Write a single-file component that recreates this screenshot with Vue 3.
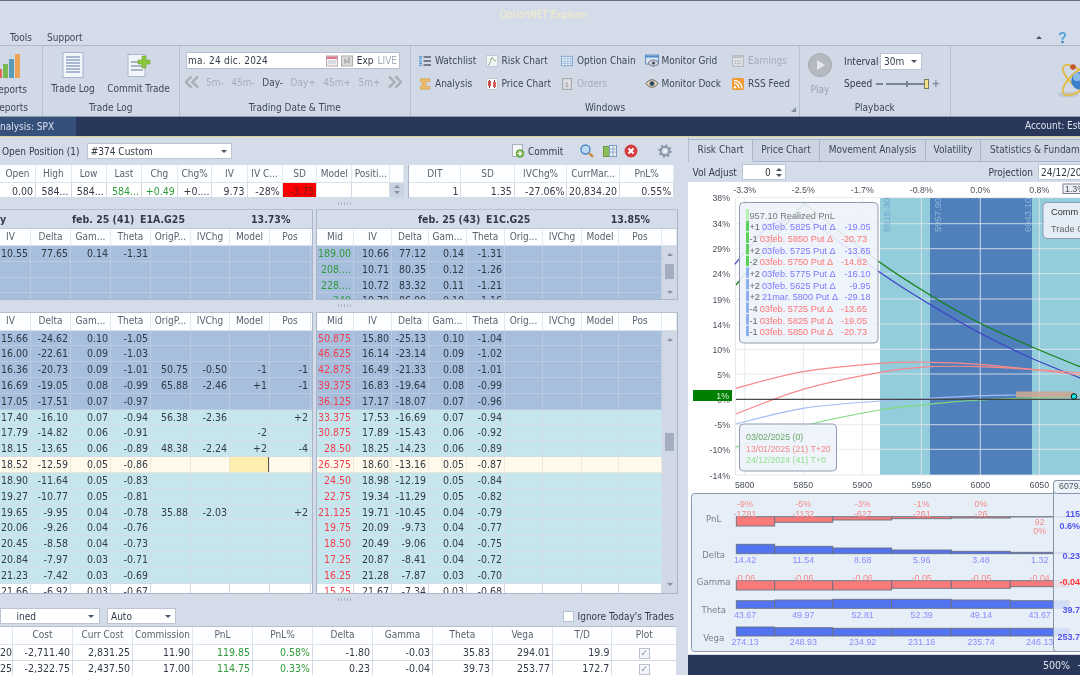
<template>
  <div class="app">
    <!-- title + menu -->
    <header class="titlebar">OptionNET Explorer</header>
    <nav class="menubar">
      <span>Tools</span>
      <span>Support</span>
      <i class="menu-gap" />
      <b class="caret-up" />
      <svg class="help" viewBox="0 0 12 14"><path d="M2 4.500C2 2 4 1 6 1s4 1.200 4 3.400c0 2.600-3 2.600-3 5H5c0-3 3-3.200 3-5 0-1-.8-1.500-2-1.500S4 3.500 4 4.500z" fill="#4f9fd8"/><circle cx="6" cy="12" r="1.500" fill="#3d86c4"/></svg>
    </nav>

    <!-- ribbon -->
    <section class="ribbon">
      <div class="rgroup g-reports">
        <div class="rbody">
          <svg class="ic-big" viewBox="0 0 24 26">
            <rect x="-2" y="16" width="6" height="9" fill="#e2665a"/>
            <rect x="5" y="11" width="5" height="14" fill="#79b94f"/>
            <rect x="11" y="6" width="5" height="19" fill="#5a9bb8"/>
            <rect x="17" y="1" width="5" height="24" fill="#eda257"/>
          </svg>
          <span class="big-label">Reports</span>
        </div>
        <div class="rlabel">Reports</div>
      </div>

      <div class="rgroup g-log">
        <div class="rbody big-row">
          <div class="big-btn btn-log">
            <svg class="ic-big" viewBox="0 0 24 26">
              <rect x="2" y="0.500" width="20" height="25" fill="#f2f5fa" stroke="#a4b4cf"/>
              <path d="M5 5h14M5 8h14M5 11h14M5 14h14M5 17h14M5 20h14" stroke="#8fa2c4" stroke-width="1.400"/>
            </svg>
            <span class="big-label">Trade Log</span>
          </div>
          <div class="big-btn btn-commit">
            <svg class="ic-big" viewBox="0 0 24 26">
              <rect x="1" y="2.500" width="17" height="22" fill="#f2f5fa" stroke="#a9b6cb"/>
              <path d="M4 10h12M4 14h11M4 18h12" stroke="#8fa2b4" stroke-width="1.400"/>
              <path d="M15 4h4v4h4v4h-4v4h-4v-4h-4V8h4z" fill="#8cc63f" stroke="#6ca32a" stroke-width=".6"/>
            </svg>
            <span class="big-label">Commit Trade</span>
          </div>
        </div>
        <div class="rlabel">Trade Log</div>
      </div>

      <div class="rgroup g-date">
        <div class="rbody date-body">
          <div class="date-input">
            <span class="date-val">ma. 24 dic. 2024</span>
            <svg class="ic" viewBox="0 0 12 11"><rect x=".5" y=".5" width="11" height="10" fill="#f6f0f0" stroke="#b9a6ae"/><rect x="1" y="1" width="10" height="2.500" fill="#d8798a"/><path d="M2 5.500h8M2 7.500h8" stroke="#b8c4da"/></svg>
            <svg class="ic" viewBox="0 0 12 11"><rect x=".5" y=".5" width="11" height="10" fill="#dcdcdc" stroke="#aaa"/><path d="M4 3v5M8 2v6M6 5v2" stroke="#888"/></svg>
            <span class="exp">Exp</span>
            <span class="live">LIVE</span>
          </div>
          <div class="step-row">
            <svg class="chev" viewBox="0 0 15 14"><path d="M7 1L1 7l6 6M14 1L8 7l6 6" fill="none" stroke="#a9adb4" stroke-width="2.600"/></svg>
            <span class="step">5m-</span>
            <span class="step">45m-</span>
            <span class="step on">Day-</span>
            <span class="step">Day+</span>
            <span class="step">45m+</span>
            <span class="step">5m+</span>
            <svg class="chev" viewBox="0 0 15 14"><path d="M1 1l6 6-6 6M8 1l6 6-6 6" fill="none" stroke="#a9adb4" stroke-width="2.600"/></svg>
          </div>
        </div>
        <div class="rlabel">Trading Date &amp; Time</div>
      </div>

      <div class="rgroup g-win">
        <div class="rbody win-grid">
          <div class="wbtn">
            <svg class="ic" viewBox="0 0 12 12"><path d="M1.500 1v10" stroke="#4c93cf" stroke-width="2.400" stroke-dasharray="1.400 .8"/><path d="M4.500 2H12M4.500 6H12M4.500 10H12" stroke="#555e6c" stroke-width="1.300"/></svg>
            Watchlist
          </div>
          <div class="wbtn">
            <svg class="ic" viewBox="0 0 12 12"><rect x=".5" y=".5" width="11" height="11" fill="#f3f5f8" stroke="#c2c8d2"/><path d="M2 10c3 0 2-7 4-7s1 3 4 3" fill="none" stroke="#78ab62"/></svg>
            Risk Chart
          </div>
          <div class="wbtn">
            <svg class="ic" viewBox="0 0 14 12"><rect x=".5" y=".5" width="13" height="11" fill="#eef4fb" stroke="#6f9ccc"/><path d="M1 3.500h12M1 6.500h12M1 9h12M4.500 1v10M8 1v10M11 1v10" stroke="#8bb1d8" stroke-width=".8"/></svg>
            Option Chain
          </div>
          <div class="wbtn w-mon">
            <svg class="ic-mon" viewBox="0 0 14 12"><rect x=".5" y=".5" width="13" height="9" fill="#d7e5f4" stroke="#5f8fbf"/><rect x="1" y="1" width="12" height="2" fill="#4f8bc6"/><ellipse cx="8.500" cy="8.500" rx="5" ry="3" fill="#cfd4dc" stroke="#59606e" stroke-width=".8"/><circle cx="8.500" cy="8.500" r="1.500" fill="#3f4855"/></svg>
            Monitor Grid
          </div>
          <div class="wbtn off">
            <svg class="ic" viewBox="0 0 12 12"><rect x=".5" y=".5" width="11" height="11" fill="#dddfe3" stroke="#b6b9bf"/><rect x=".5" y=".5" width="11" height="2.500" fill="#bfc2c8"/><path d="M3 6h6M3 8.500h6" stroke="#a5a8ae" stroke-dasharray="1.200 1"/></svg>
            Earnings
          </div>
          <div class="wbtn">
            <svg class="ic" viewBox="0 0 12 13"><path d="M.8 .8h10.400v3.200H5.600L8 6.500 5.600 9h5.600v3.200H.8V9.700L3.800 6.500.8 3.300z" fill="#eebb6a" stroke="#d49a3a" stroke-width=".6"/></svg>
            Analysis
          </div>
          <div class="wbtn">
            <svg class="ic" viewBox="0 0 12 12"><rect x=".5" y=".5" width="11" height="11" fill="#f3f5f8" stroke="#c2c8d2"/><path d="M3.500 2v8M8.500 2v8" stroke="#7c3030"/><rect x="2" y="3" width="3" height="5" fill="#c84f4f"/><rect x="7" y="4" width="3" height="5" fill="#d65d5d"/></svg>
            Price Chart
          </div>
          <div class="wbtn off">
            <svg class="ic" viewBox="0 0 12 12"><rect x="1.500" y=".5" width="9" height="11" fill="#d0d2d6" stroke="#a8abb1"/><rect x="3" y="2" width="6" height="8" fill="#e1e2e5"/><text x="6" y="8.800" class="ic-dollar">$</text></svg>
            Orders
          </div>
          <div class="wbtn w-mon">
            <svg class="ic-mon" viewBox="0 0 14 12"><path d="M1 6c3-5 9-5 12 0-3 5-9 5-12 0z" fill="#e7d7b6" stroke="#6f6658"/><circle cx="7" cy="6" r="2.600" fill="#4e6f8e"/><circle cx="7" cy="6" r="1.200" fill="#222c36"/></svg>
            Monitor Dock
          </div>
          <div class="wbtn">
            <svg class="ic" viewBox="0 0 12 12"><rect width="12" height="12" rx="1.500" fill="#ef9a2f"/><circle cx="3" cy="9.200" r="1.300" fill="#fff"/><path d="M2 5.200a5 5 0 0 1 5 5M2 2.400a8 8 0 0 1 8 8" fill="none" stroke="#fff" stroke-width="1.500"/></svg>
            RSS Feed
          </div>
        </div>
        <div class="rlabel">Windows</div>
        <b class="launcher" />
      </div>

      <div class="rgroup g-play">
        <div class="rbody play-body">
          <div class="play-btn">
            <span class="play-disc"><b class="play-tri" /></span>
            <span class="big-label muted">Play</span>
          </div>
          <div class="play-side">
            <div class="play-line">
              <span class="play-name">Interval</span>
              <span class="combo combo-int">30m<b class="caret" /></span>
            </div>
            <div class="play-line">
              <span class="play-name name-speed">Speed</span>
              <span class="slider">
                <b class="sl-minus" />
                <span class="sl-track"><b class="sl-tick" /><b class="sl-thumb" /></span>
                <b class="sl-plus">+</b>
              </span>
            </div>
          </div>
        </div>
        <div class="rlabel">Playback</div>
      </div>

      <div class="rgroup g-logo">
        <svg class="atom" viewBox="0 0 60 60">
          <ellipse cx="14" cy="50" rx="14" ry="3.500" fill="#b7bdc8" opacity=".7"/>
          <g fill="none" stroke="#e2bb42" stroke-width="2.400">
            <ellipse cx="30" cy="30" rx="29" ry="12" transform="rotate(-40 30 30)"/>
            <ellipse cx="30" cy="30" rx="29" ry="11" transform="rotate(40 30 30)"/>
          </g>
          <circle cx="30" cy="31" r="12" fill="#3d7fcb"/>
          <circle cx="26" cy="26" r="5.500" fill="#9fcaf2" opacity=".8"/>
          <circle cx="20.500" cy="12.300" r="3.800" fill="#c4552f"/>
        </svg>
      </div>
    </section>

    <!-- navy strip -->
    <div class="navstrip">
      <span class="navtab">nalysis: SPX</span>
      <span class="account">Account: Est</span>
    </div>

    <main class="work">
      <section class="left">
        <div class="pos-bar">
          <span class="pos-name">Open Position (1)</span>
          <span class="combo combo-pos">#374 Custom<b class="caret" /></span>
          <span class="pos-commit">
            <svg class="ic-tool" viewBox="0 0 14 14"><rect x="1.500" y=".5" width="10" height="12" fill="#f5f6f8" stroke="#a8b0bc"/><circle cx="9" cy="9.500" r="4.300" fill="#69a93d"/><path d="M9 7v5M6.500 9.500h5" stroke="#fff" stroke-width="1.500"/></svg>
            Commit
          </span>
          <svg class="ic-tool t-search" viewBox="0 0 14 14"><circle cx="5.500" cy="5.500" r="4.500" fill="#bcd9f2" stroke="#4f86c6" stroke-width="1.400"/><path d="M9 9l4 4" stroke="#c9893c" stroke-width="2.400"/></svg>
          <svg class="ic-tool t-col" viewBox="0 0 14 14"><rect x=".5" y="2.500" width="6" height="10" fill="#8bbd5a" stroke="#6d9a42"/><rect x="6.500" y="1.500" width="7" height="11" fill="#edf2f8" stroke="#7c9cbf"/><path d="M7 5h6M7 8h6M10 2v10" stroke="#7c9cbf" stroke-width=".8"/></svg>
          <svg class="ic-tool t-x" viewBox="0 0 14 14"><circle cx="7" cy="7" r="6.500" fill="#d33f3f"/><path d="M4.500 4.500l5 5M9.500 4.500l-5 5" stroke="#fff" stroke-width="2"/></svg>
          <svg class="ic-tool t-gear" viewBox="0 0 14 14"><circle cx="7" cy="7" r="4.300" fill="none" stroke="#8592a4" stroke-width="2"/><circle cx="7" cy="7" r="6" fill="none" stroke="#8592a4" stroke-width="1.600" stroke-dasharray="1.800 2.900"/><circle cx="7" cy="7" r="1.700" fill="#eef1f5"/></svg>
        </div>

        <div class="pos-tables">
          <div class="grid pos-a">
            <div class="ghead">
              <span v-for="h in posHeadA" :key="h">{{ h }}</span>
              <span class="sb-cell" />
            </div>
            <div class="grow">
              <span v-for="(c, i) in posRowA" :key="i" class="cell" :class="c.cls">{{ c.t }}</span>
              <span class="sb-cell spin"><b class="caret-up soft" /><b class="caret soft" /></span>
            </div>
          </div>
          <div class="grid pos-b">
            <div class="ghead">
              <span v-for="h in posHeadB" :key="h">{{ h }}</span>
            </div>
            <div class="grow">
              <span v-for="(c, i) in posRowB" :key="i" class="cell">{{ c }}</span>
            </div>
          </div>
        </div>

        <div class="splitter"><i /></div>

        <div class="chains chain-top">
          <div class="grid chain cl">
            <div class="exp-head eh-l"><span>y</span><span>feb. 25 (41)</span><span>E1A.G25</span><span class="ivr">13.73%</span></div>
            <div class="ghead"><span v-for="h in headL" :key="h">{{ h }}</span></div>
            <div v-for="(r, i) in callsL" :key="i" class="grow blue">
              <span v-for="(c, j) in r" :key="j" class="cell">{{ c }}</span>
            </div>
          </div>
          <div class="grid chain cr">
            <div class="exp-head eh-r"><span>feb. 25 (43)</span><span>E1C.G25</span><span class="ivr">13.85%</span></div>
            <div class="ghead"><span v-for="h in headR" :key="h">{{ h }}</span><span class="sb-cell" /></div>
            <div v-for="(r, i) in callsR" :key="i" class="grow blue">
              <span v-for="(c, j) in r" :key="j" class="cell" :class="{ up: j === 0 }">{{ c }}</span>
              <span class="sb-cell sb-blank" />
            </div>
            <div class="sbar sbar-top"><b class="caret-up soft" /><i class="thumb thumb-top" /><b class="caret soft" /></div>
          </div>
        </div>

        <div class="splitter split-2"><i /></div>

        <div class="chains chain-low">
          <div class="grid chain cl">
            <div class="ghead"><span v-for="h in headL" :key="h">{{ h }}</span></div>
            <div v-for="(r, i) in putsL" :key="i" class="grow" :class="tone(i)">
              <span v-for="(c, j) in r" :key="j" class="cell" :class="{ pick: i === 8 && j === 6 }">{{ c }}</span>
            </div>
          </div>
          <div class="grid chain cr">
            <div class="ghead"><span v-for="h in headR" :key="h">{{ h }}</span><span class="sb-cell" /></div>
            <div v-for="(r, i) in putsR" :key="i" class="grow" :class="tone(i)">
              <span v-for="(c, j) in r" :key="j" class="cell" :class="{ down: j === 0 }">{{ c }}</span>
              <span class="sb-cell sb-blank" />
            </div>
            <div class="sbar sbar-low"><b class="caret-up soft" /><i class="thumb thumb-low" /><b class="caret soft" /></div>
          </div>
        </div>

        <div class="splitter split-3"><i /></div>

        <div class="sum-bar">
          <span class="combo combo-mode">ined<b class="caret" /></span>
          <span class="combo combo-auto">Auto<b class="caret" /></span>
          <label class="ignore"><i class="check" />Ignore Today's Trades</label>
        </div>

        <div class="grid sum">
          <div class="ghead"><span v-for="h in sumHead" :key="h">{{ h }}</span></div>
          <div v-for="(r, i) in sumRows" :key="i" class="grow">
            <span v-for="(c, j) in r" :key="j" class="cell" :class="{ up: j === 4 || j === 5 }">{{ c }}</span>
            <span class="cell plot"><i class="check checked">✓</i></span>
          </div>
        </div>
      </section>

      <section class="right">
        <div class="tabs">
          <span v-for="(t, i) in tabs" :key="t" class="tab" :class="{ active: i === 0 }">{{ t }}</span>
        </div>
        <div class="vol-bar">
          <span>Vol Adjust</span>
          <span class="spinbox">0<span class="spin"><b class="caret-up" /><b class="caret" /></span></span>
          <span class="proj">Projection</span>
          <span class="proj-input">24/12/2024</span>
        </div>

        <svg class="chart" viewBox="688 182 392 472">
          <rect x="688" y="182" width="392" height="472" fill="#fff"/>
          <!-- expected move bands -->
          <rect x="880" y="198" width="200" height="277" fill="#93ccdb"/>
          <rect x="930" y="198" width="102" height="277" fill="#4f80bb"/>
          <g class="grid-lines">
            <line v-for="y in gridY" :key="y.v" x1="736" x2="1080" :y1="y.y" :y2="y.y"/>
            <line v-for="x in gridX" :key="x.v" :x1="x.x" :x2="x.x" y1="198" y2="475"/>
            <line x1="735.500" x2="735.500" y1="198" y2="475"/>
          </g>
          <text v-for="b in bandLabels" :key="b.t" class="band-label" :class="b.cls" :transform="`translate(${b.x} 232) rotate(-90)`">{{ b.t }}</text>
          <g fill="none" stroke-width="1.200">
            <path :d="curves.green" stroke="#128012"/>
            <path :d="curves.blue" stroke="#3c40c8"/>
            <path :d="curves.red1" stroke="#f98a8a"/>
            <path :d="curves.red2" stroke="#f98a8a"/>
            <path :d="curves.sky" stroke="#a0bdf4"/>
            <path :d="curves.mint" stroke="#7fd97f"/>
          </g>
          <rect x="1016" y="391.500" width="58" height="6" fill="#c9a997" opacity=".9"/>
          <line x1="736" x2="1080" y1="399.300" y2="399.300" stroke="#222"/>
          <circle cx="1074" cy="396.500" r="2.800" fill="#10e8e8" stroke="#111"/>

          <!-- axes -->
          <text v-for="x in gridX" :key="'t' + x.v" :x="x.x" y="193" class="ax mid">{{ x.top }}</text>
          <rect x="1063" y="184" width="20" height="9.500" fill="#edf0f4" stroke="#78808c"/>
          <text x="1065" y="192" class="ax">1.3%</text>
          <text v-for="y in gridY" :key="'l' + y.v" x="730" :y="y.y + 3.500" class="ax end">{{ y.v }}</text>
          <text v-for="x in gridX" :key="'b' + x.v" :x="x.x" y="488" class="ax mid">{{ x.v }}</text>
          <rect x="693" y="390" width="39" height="11" fill="#008000"/>
          <text x="729" y="399" class="ax end flag">1%</text>

          <!-- legends -->
          <rect x="739.500" y="202.500" width="138.500" height="140.500" rx="4" class="legend"/>
          <g v-for="(l, i) in legend" :key="i">
            <rect x="746" :y="209 + i * 11.670" width="3" height="10.500" :fill="l.bar"/>
            <text x="749.500" :y="218.500 + i * 11.670" class="lg">
              <tspan fill="#666">{{ l.qty }}</tspan><tspan :fill="l.color" :x="l.nameX">{{ l.name }}</tspan>
            </text>
            <text v-if="l.delta" :x="l.deltaX" :y="218.500 + i * 11.670" class="lg end" :fill="l.color">{{ l.delta }}</text>
          </g>
          <rect x="1043" y="202.500" width="50" height="36" rx="4" class="legend"/>
          <text x="1051" y="215" class="lg" fill="#333" font-weight="700">Comm</text>
          <text x="1051" y="232" class="lg" fill="#666">Trade C</text>

          <rect x="739.500" y="424" width="97" height="47" rx="4" class="legend"/>
          <text x="746" y="440" class="lg-low" fill="#6aa86a">03/02/2025 (0)</text>
          <text x="746" y="451.500" class="lg-low" fill="#f48a8a">13/01/2025 (21) T+20</text>
          <text x="746" y="463" class="lg-low" fill="#90e090">24/12/2024 (41) T+0</text>

          <!-- greeks panel -->
          <rect x="691.500" y="493.500" width="400" height="158" rx="3" fill="#e6eff7" stroke="#8b97a8"/>
          <g v-for="g in greeks" :key="g.name">
            <text :x="g.nx" :y="g.ny" class="gk-name">{{ g.name }}</text>
            <rect v-for="(b, i) in g.bars" :key="i" :x="b.x" :y="b.y" :width="b.w" :height="b.h" :fill="g.fill" stroke="#687080" stroke-width=".9"/>
            <text v-for="(t, i) in g.labels" :key="i" :x="t.x" :y="t.y" class="gk-val" :fill="g.text">{{ t.t }}</text>
          </g>
          <rect x="1053.500" y="480.500" width="40" height="171" rx="3" fill="#e8eff8" fill-opacity=".86" stroke="#8895a8"/>
          <rect x="1053.500" y="480.500" width="40" height="13" rx="3" fill="#eef3fa" stroke="#8895a8"/>
          <text x="1059" y="489" class="ax">6079.</text>
          <text v-for="t in tipVals" :key="t.t" x="1080" :y="t.y" class="tip" :class="t.cls">{{ t.t }}</text>
        </svg>

        <div class="zoombar">
          <span>500%</span>
          <i class="zoom-dash" />
        </div>
      </section>
    </main>
  </div>
</template>

<script setup>
const posHeadA = ['Open', 'High', 'Low', 'Last', 'Chg', 'Chg%', 'IV', 'IV C...', 'SD', 'Model', 'Positi...']
const posRowA = [
  { t: '0.00' }, { t: '584...' }, { t: '584...' }, { t: '584...', cls: 'up' }, { t: '+0.49', cls: 'up' },
  { t: '+0....' }, { t: '9.73' }, { t: '-28%' }, { t: '-3.75', cls: 'alarm' }, { t: '' }, { t: '' }
]
const posHeadB = ['DIT', 'SD', 'IVChg%', 'CurrMar...', 'PnL%']
const posRowB = ['1', '1.35', '-27.06%', '20,834.20', '0.55%']

const headL = ['IV', 'Delta', 'Gam...', 'Theta', 'OrigP...', 'IVChg', 'Model', 'Pos']
const headR = ['Mid', 'IV', 'Delta', 'Gam...', 'Theta', 'Orig...', 'IVChg', 'Model', 'Pos']

const callsL = [
  ['10.55', '77.65', '0.14', '-1.31', '', '', '', ''],
  ['', '', '', '', '', '', '', ''],
  ['', '', '', '', '', '', '', ''],
  ['', '', '', '', '', '', '', '']
]
const callsR = [
  ['189.00', '10.66', '77.12', '0.14', '-1.31', '', '', '', ''],
  ['208....', '10.71', '80.35', '0.12', '-1.26', '', '', '', ''],
  ['228....', '10.72', '83.32', '0.11', '-1.21', '', '', '', ''],
  ['249', '10.79', '86.00', '0.10', '-1.16', '', '', '', '']
]

const putsL = [
  ['15.66', '-24.62', '0.10', '-1.05', '', '', '', ''],
  ['16.00', '-22.61', '0.09', '-1.03', '', '', '', ''],
  ['16.36', '-20.73', '0.09', '-1.01', '50.75', '-0.50', '-1', '-1'],
  ['16.69', '-19.05', '0.08', '-0.99', '65.88', '-2.46', '+1', '-1'],
  ['17.05', '-17.51', '0.07', '-0.97', '', '', '', ''],
  ['17.40', '-16.10', '0.07', '-0.94', '56.38', '-2.36', '', '+2'],
  ['17.79', '-14.82', '0.06', '-0.91', '', '', '-2', ''],
  ['18.15', '-13.65', '0.06', '-0.89', '48.38', '-2.24', '+2', '-4'],
  ['18.52', '-12.59', '0.05', '-0.86', '', '', '', ''],
  ['18.90', '-11.64', '0.05', '-0.83', '', '', '', ''],
  ['19.27', '-10.77', '0.05', '-0.81', '', '', '', ''],
  ['19.65', '-9.95', '0.04', '-0.78', '35.88', '-2.03', '', '+2'],
  ['20.06', '-9.26', '0.04', '-0.76', '', '', '', ''],
  ['20.45', '-8.58', '0.04', '-0.73', '', '', '', ''],
  ['20.84', '-7.97', '0.03', '-0.71', '', '', '', ''],
  ['21.23', '-7.42', '0.03', '-0.69', '', '', '', ''],
  ['21.66', '-6.92', '0.03', '-0.67', '', '', '', '']
]
const putsR = [
  ['50.875', '15.80', '-25.13', '0.10', '-1.04'],
  ['46.625', '16.14', '-23.14', '0.09', '-1.02'],
  ['42.875', '16.49', '-21.33', '0.08', '-1.01'],
  ['39.375', '16.83', '-19.64', '0.08', '-0.99'],
  ['36.125', '17.17', '-18.07', '0.07', '-0.96'],
  ['33.375', '17.53', '-16.69', '0.07', '-0.94'],
  ['30.875', '17.89', '-15.43', '0.06', '-0.92'],
  ['28.50', '18.25', '-14.23', '0.06', '-0.89'],
  ['26.375', '18.60', '-13.16', '0.05', '-0.87'],
  ['24.50', '18.98', '-12.19', '0.05', '-0.84'],
  ['22.75', '19.34', '-11.29', '0.05', '-0.82'],
  ['21.125', '19.71', '-10.45', '0.04', '-0.79'],
  ['19.75', '20.09', '-9.73', '0.04', '-0.77'],
  ['18.50', '20.49', '-9.06', '0.04', '-0.75'],
  ['17.25', '20.87', '-8.41', '0.04', '-0.72'],
  ['16.25', '21.28', '-7.87', '0.03', '-0.70'],
  ['15.25', '21.67', '-7.34', '0.03', '-0.68']
].map(r => [...r, '', '', '', ''])

// 5 rows itm, 11 rows otm, last one plain; row 8 is the ATM-ish highlight
function tone(i) {
  if (i < 5) return 'blue'
  if (i === 8) return 'hl'
  if (i === 16) return 'plain'
  return 'teal'
}

const sumHead = ['', 'Cost', 'Curr Cost', 'Commission', 'PnL', 'PnL%', 'Delta', 'Gamma', 'Theta', 'Vega', 'T/D', 'Plot']
const sumRows = [
  ['20', '-2,711.40', '2,831.25', '11.90', '119.85', '0.58%', '-1.80', '-0.03', '35.83', '294.01', '19.9'],
  ['25', '-2,322.75', '2,437.50', '17.00', '114.75', '0.33%', '0.23', '-0.04', '39.73', '253.77', '172.7']
]

const tabs = ['Risk Chart', 'Price Chart', 'Movement Analysis', 'Volatility', 'Statistics & Fundamentals']

const gridY = [
  ['38%', 197.7], ['34%', 223.7], ['29%', 248.7], ['24%', 273.7], ['19%', 299], ['14%', 324],
  ['10%', 349.3], ['5%', 374], ['0%', 399.5], ['-5%', 424.7], ['-10%', 449.3], ['-14%', 475]
].map(([v, y]) => ({ v, y }))
const gridX = [
  [5800, 744.7, '-3.3%'], [5850, 803.3, '-2.5%'], [5900, 862.3, '-1.7%'],
  [5950, 921.3, '-0.8%'], [6000, 980.3, '0.0%'], [6050, 1039.3, '0.8%']
].map(([v, x, top]) => ({ v, x, top }))
const bandLabels = [
  { t: '5915.30', x: 889.5, cls: 'on-light' },
  { t: '5957.90', x: 940.5, cls: 'on-dark' },
  { t: '6043.10', x: 1030.5, cls: 'on-dark' }
]

// catmull-rom to bezier, good enough for the payoff curves
function smooth(p) {
  let d = `M${p[0][0]} ${p[0][1]}`
  for (let i = 0; i < p.length - 1; i++) {
    const a = p[i - 1] || p[i]
    const b = p[i]
    const c = p[i + 1]
    const e = p[i + 2] || c
    d += `C${b[0] + (c[0] - a[0]) / 6} ${b[1] + (c[1] - a[1]) / 6} ${c[0] - (e[0] - b[0]) / 6} ${c[1] - (e[1] - b[1]) / 6} ${c[0]} ${c[1]}`
  }
  return d
}
const curves = {
  green: 'M736 285L803.700 203.300' + smooth([[803.7, 203.3], [878, 261], [933, 296.7], [980.3, 323.3], [1031.7, 346.7], [1080, 366.7]]).replace(/^M[^C]+/, ''),
  blue: 'M734.700 264.300L768 225L803.700 215' + smooth([[803.7, 215], [878, 271], [929.7, 304.3], [980.3, 333.3], [1031, 358], [1080, 378]]).replace(/^M[^C]+/, ''),
  red1: smooth([[735.7, 388.3], [803, 371.7], [880, 363.3], [930, 362.3], [980, 364.3], [1031, 369.3], [1080, 375]]),
  red2: smooth([[735.7, 414], [803, 389.3], [880, 372.3], [930, 366.7], [980, 366.7], [1031, 369.3], [1080, 372.7]]),
  sky: smooth([[735.7, 424], [803, 408.3], [880, 401], [930, 398.3], [980, 395.7], [1016, 395]]),
  mint: smooth([[735.7, 447.3], [803, 426], [880, 410], [930, 404.3], [980, 400], [1074, 396.7]])
}

const GREEN_BAR = '#5ad25a'
const BLUE_BAR = '#8fb0ee'
const BLUE = '#7a7aff'
const RED = '#f77'
// long legs sit a bit further right than short ones
const leg = (bar, qty, name, delta) => {
  const long = qty[0] === '+'
  return { bar, qty, name, delta, color: long ? BLUE : RED, nameX: long ? 762 : 759.7, deltaX: long ? 870.5 : 867 }
}
const legend = [
  { bar: '#b5efb5', qty: '', name: '957.10 Realized PnL', color: '#777' },
  leg(GREEN_BAR, '+1', '03feb. 5825 Put Δ', '-19.05'),
  leg(GREEN_BAR, '-1', '03feb. 5850 Put Δ', '-20.73'),
  leg(GREEN_BAR, '+2', '03feb. 5725 Put Δ', '-13.65'),
  leg(GREEN_BAR, '-2', '03feb. 5750 Put Δ', '-14.82'),
  leg(BLUE_BAR, '+2', '03feb. 5775 Put Δ', '-16.10'),
  leg(BLUE_BAR, '+2', '03feb. 5625 Put Δ', '-9.95'),
  leg(BLUE_BAR, '+2', '21mar. 5800 Put Δ', '-29.18'),
  leg(BLUE_BAR, '-4', '03feb. 5725 Put Δ', '-13.65'),
  leg(BLUE_BAR, '-1', '03feb. 5825 Put Δ', '-19.05'),
  leg(BLUE_BAR, '-1', '03feb. 5850 Put Δ', '-20.73')
]

const edges = [736.3, 774.7, 832.7, 891.7, 951.3, 1010.3, 1069]
const cx = [745, 803.3, 862.7, 921.7, 981, 1039.7]
const barsFrom = (tops, bots) => tops.map((t, i) => ({ x: edges[i], w: edges[i + 1] - edges[i], y: t, h: bots[i] - t }))
const fill6 = v => Array(6).fill(v)
const labelsAt = (vals, y) => vals.map((t, i) => ({ t, x: cx[i], y }))
const greeks = [
  {
    name: 'PnL', nx: 713.7, ny: 521.5, fill: '#f87a7a', text: '#f58a8a',
    bars: barsFrom(fill6(516.7), [526, 522.3, 520, 518.7, 518, 517]),
    labels: [
      ...labelsAt(['-9%', '-5%', '-3%', '-1%', '0%'], 506.5),
      ...labelsAt(['-1781', '-1132', '-627', '-261', '-26'], 517),
      { t: '92', x: 1039.7, y: 525 }, { t: '0%', x: 1039.7, y: 534 }
    ]
  },
  {
    name: 'Delta', nx: 713.7, ny: 557.5, fill: '#5274f0', text: '#8a8aff',
    bars: barsFrom([544.3, 546.3, 548, 550, 551.3, 552.3], fill6(553.7)),
    labels: labelsAt(['14.42', '11.54', '8.68', '5.96', '3.48', '1.32'], 562.5)
  },
  {
    name: 'Gamma', nx: 713.7, ny: 585, fill: '#f87a7a', text: '#f58a8a',
    bars: barsFrom(fill6(580.7), [590, 590, 590, 588.3, 588.3, 586.7]),
    labels: labelsAt(['-0.06', '-0.06', '-0.06', '-0.05', '-0.05', '-0.04'], 581)
  },
  {
    name: 'Theta', nx: 713.7, ny: 612.5, fill: '#5274f0', text: '#8a8aff',
    bars: barsFrom([600.7, 600, 599.3, 599.3, 600, 600.7], fill6(608.3)),
    labels: labelsAt(['43.67', '49.97', '52.81', '52.39', '49.14', '43.67'], 617.5)
  },
  {
    name: 'Vega', nx: 713.7, ny: 640.5, fill: '#5274f0', text: '#8a8aff',
    bars: barsFrom([627, 627.7, 628.3, 628.3, 628.3, 628.3], fill6(636)),
    labels: labelsAt(['274.13', '248.93', '234.92', '231.16', '235.74', '246.13'], 645)
  }
]
const tipVals = [
  { t: '115', y: 517 }, { t: '0.6%', y: 529 }, { t: '0.23', y: 558.5 },
  { t: '-0.04', y: 585, cls: 'neg' }, { t: '39.7', y: 612.5 }, { t: '253.7', y: 640 }
]
</script>

<style>
html, body {
  margin: 0;
  background: #d5dce9;
}
</style>

<style scoped>
.app {
  width: 1080px;
  height: 675px;
  overflow: hidden;
  display: flex;
  flex-direction: column;
  background: #d5dce9;
  border-top: 1px solid #666c76;
  box-sizing: border-box;
  font-family: "DejaVu Sans Condensed", "Liberation Sans", sans-serif;
  font-size: 10px;
  color: #333b47;
  filter: blur(0.3px);
}

/* title + menu */
.titlebar {
  height: 28px;
  line-height: 27px;
  text-align: center;
  color: #f3edc6;
  padding-left: 8px;
}
.menubar {
  height: 16px;
  display: flex;
  align-items: center;
  padding: 0 12px 0 10px;
  gap: 15px;
  color: #3f4856;
}
.menu-gap { flex: 1; }
.help { width: 11px; height: 13px; margin-left: 0; }

/* ribbon */
.ribbon {
  height: 70px;
  display: flex;
  background: #d1d9e6;
  border-top: 1px solid #aeb8c8;
  border-bottom: 1px solid #8f9bae;
}
.rgroup {
  position: relative;
  display: flex;
  flex-direction: column;
  border-right: 1px solid #b7c1d1;
  box-sizing: border-box;
  flex: none;
}
.rbody { flex: 1; min-height: 0; }
.rlabel {
  height: 15px;
  line-height: 13px;
  text-align: center;
  color: #3f4856;
}
.g-reports { width: 43px; overflow: hidden; }
.g-reports .rbody {
  display: flex;
  flex-direction: column;
  align-items: flex-end;
  padding-top: 7px;
  padding-right: 15px;
}
.g-reports .ic-big { margin-right: 5px; }
.g-reports .rlabel { display: flex; justify-content: flex-end; padding-right: 14px; white-space: nowrap; }
.g-log { width: 136.500px; }
.g-date { width: 231.500px; }
.g-win { width: 389px; }
.g-play { width: 150.500px; }
.g-logo { flex: 1; border-right: 0; align-items: flex-end; overflow: hidden; }

.big-row { display: flex; padding: 6px 0 0 7px; gap: 10px; }
.big-btn {
  display: flex;
  flex-direction: column;
  align-items: center;
}
.ic-big { width: 24px; height: 26px; flex: none; }
.big-label { margin-top: 4px; line-height: 13px; white-space: nowrap; color: #3f4856; }
.big-label.muted { color: #9aa2ad; }
.btn-log { width: 46px; }
.btn-commit { width: 65px; }

.date-body { padding: 6px 0 0 6.500px; }
.date-input {
  width: 214px;
  height: 17px;
  box-sizing: border-box;
  background: #fff;
  border: 1px solid #b6c0d0;
  display: flex;
  align-items: center;
  gap: 3px;
  padding: 0 2px 0 1px;
}
.date-val { flex: 1; letter-spacing: .25px; }
.exp { margin-left: 1px; }
.live { color: #a5adb8; margin-left: 1px; }
.ic { width: 12px; height: 12px; flex: none; }
.ic-mon { width: 14px; height: 13px; flex: none; }
.step-row {
  display: flex;
  align-items: center;
  gap: 7.500px;
  margin-top: 6px;
  height: 14px;
  margin-left: -1.500px;
}
.chev { width: 14px; height: 14px; flex: none; }
.step { color: #a7aeb9; }
.step.on { color: #3f4856; }

.win-grid {
  display: grid;
  grid-template-columns: 66.500px 75.500px 84.400px 86.600px 60px;
  grid-auto-rows: 23px;
  padding: 3px 0 0 8px;
  align-items: center;
}
.wbtn { display: flex; align-items: center; gap: 4px; white-space: nowrap; color: #3f4856; }
.w-mon { gap: 2px; }
.off { color: #a5adb8; }
.ic-dollar { font-size: 7px; fill: #8a8d93; text-anchor: middle; }
.launcher {
  position: absolute;
  right: 3px;
  bottom: 4px;
  width: 0;
  height: 0;
  border-left: 5px solid transparent;
  border-bottom: 5px solid #7f8a9a;
}

.play-body { display: flex; padding-top: 7px; }
.play-btn { width: 40px; display: flex; flex-direction: column; align-items: center; margin-right: 4px; }
.play-disc {
  width: 24px;
  height: 24px;
  border-radius: 50%;
  background: #b5b9c0;
  border: 1px solid #a5a9b0;
  box-sizing: border-box;
  display: flex;
  align-items: center;
  justify-content: center;
}
.play-tri {
  width: 0;
  height: 0;
  margin-left: 2px;
  border-left: 8px solid #e3e6ea;
  border-top: 5px solid transparent;
  border-bottom: 5px solid transparent;
}
.play-side { display: flex; flex-direction: column; gap: 5px; }
.play-line { display: flex; align-items: center; height: 17px; }
.play-name { width: 36px; }
.name-speed { width: 31.700px; }
.play-body .big-label { margin-top: 6px; }
.slider { display: flex; align-items: center; gap: 3px; }
.sl-minus { width: 7px; height: 2px; background: #7b8697; }
.sl-track {
  width: 43px;
  height: 2px;
  background: #7b8697;
  position: relative;
  display: block;
}
.sl-tick { position: absolute; left: 20px; top: -2px; width: 2px; height: 6px; background: #7b8697; }
.sl-thumb { position: absolute; right: 0; top: -4px; width: 3px; height: 8px; background: #f4e08a; border: 1px solid #7d7a60; }
.sl-plus { font-size: 11px; color: #7b8697; line-height: 8px; }
.atom { width: 44px; height: 44px; margin-right: -22px; margin-top: 12px; flex: none; }

/* combos */
.combo {
  display: inline-flex;
  align-items: center;
  justify-content: space-between;
  background: #fff;
  border: 1px solid #bcc5d3;
  box-sizing: border-box;
  padding: 0 4px 0 3px;
}
.combo-int { width: 41.500px; height: 17px; }
.combo-pos { width: 145.600px; height: 16px; }
.combo-mode { width: 100px; height: 16px; justify-content: flex-end; gap: 52px; padding-right: 5px; }
.combo-auto { width: 69px; height: 16px; margin-left: 7px; }
.caret, .caret-up {
  display: block;
  width: 0;
  height: 0;
  border-left: 3px solid transparent;
  border-right: 3px solid transparent;
}
.caret { border-top: 3px solid #4a5360; }
.caret-up { border-bottom: 3px solid #4a5360; }
.caret.soft { border-top-color: #87929f; }
.caret-up.soft { border-bottom-color: #87929f; }

/* navy */
.navstrip {
  height: 20px;
  flex: none;
  box-sizing: border-box;
  background: #28375a;
  border-bottom: 1px solid #d9cf8f;
  display: flex;
  justify-content: space-between;
  color: #dde3ee;
}
.navtab {
  width: 76px;
  background: #35507a;
  line-height: 19px;
  white-space: nowrap;
}
.account { line-height: 18px; margin-right: -1px; }

.work { flex: 1; min-height: 0; display: flex; }

/* left column */
.left { width: 688px; flex: none; overflow: hidden; display: flex; flex-direction: column; }
.pos-bar {
  height: 28px;
  flex: none;
  display: flex;
  align-items: center;
  padding-left: 2px;
}
.pos-name { width: 84.800px; white-space: nowrap; }
.pos-commit { display: flex; align-items: center; gap: 3px; margin-left: 278.600px; width: 69px; }
.ic-tool { width: 14px; height: 14px; flex: none; }
.t-col { margin-left: 8.700px; }
.t-x { margin-left: 7.700px; }
.t-gear { margin-left: 19.600px; }

.pos-tables { height: 33px; flex: none; display: flex; gap: 4.400px; }
.grid {
  position: relative;
  overflow: hidden;
  box-sizing: border-box;
  background: #fff;
}
.ghead, .grow { display: grid; box-sizing: border-box; }
.ghead {
  height: 17.500px;
  background: #fdfeff;
  border-bottom: 1px solid #dce2ec;
  color: #59626f;
  text-align: center;
  line-height: 15.500px;
}
.ghead > span {
  border-right: 1px solid #e3e8f0;
  white-space: nowrap;
  overflow: hidden;
}
.grow {
  height: 15.830px;
  border-bottom: 1px solid #d3dbe7;
  line-height: 15px;
}
.cell {
  font-size: 10.500px;
  text-align: right;
  padding-right: 2px;
  border-right: 1px solid #d3dbe7;
  white-space: nowrap;
  overflow: hidden;
}
.up { color: #2f9a3b; }
.down { color: #f13f4f; }
.alarm { background: #fb0000; color: #7a1616; }
.sb-cell { background: #fdfeff; }

.pos-a { width: 404px; }
.pos-b { width: 266px; border-left: 1px solid #aab5c7; }
.pos-a .ghead, .pos-a .grow { grid-template-columns: 36px 35.600px 35.100px 35.300px 35.700px 34.800px 35.100px 35.100px 34.800px 34.800px 38.200px 13.500px; }
.pos-b .ghead, .pos-b .grow { grid-template-columns: 52px 53.400px 52.700px 52.500px 54.400px; }
.pos-a .ghead, .pos-b .ghead { line-height: 17px; }
.pos-a .grow, .pos-b .grow { height: 15.500px; line-height: 16px; }
.pos-a .sb-cell.spin {
  background: #c9d2e0;
  display: flex;
  flex-direction: column;
  align-items: center;
  justify-content: center;
  gap: 3px;
}

.splitter {
  height: 11px;
  flex: none;
  position: relative;
  display: flex;
  justify-content: center;
}
.splitter i {
  width: 13px;
  height: 3px;
  margin-top: 4px;
  background: repeating-linear-gradient(90deg, #aab4c4 0 1px, transparent 1px 3px);
}
.split-2 { height: 12px; }
.split-3 { height: 12px; }

.chains { display: flex; flex: none; gap: 3px; }
.chain-top { height: 91px; }
.chain-low { height: 282px; }
.chain { border: 1px solid #aab5c7; border-top-color: #b6c0d0; }
.cl { width: 322px; margin-left: -9px; border-left: 0; }
.cr { width: 362px; }
.cl .ghead, .cl .grow { grid-template-columns: 40px 40px 40px 40px 40px 39px 40px 41px; }
.cr .ghead, .cr .grow { grid-template-columns: 37px 38px 37px 38px 38px 38px 39px 37px 43px 15px; }
.exp-head {
  height: 17.500px;
  line-height: 18px;
  background: #d5dce9;
  font-weight: 700;
  font-size: 10.500px;
  display: grid;
  white-space: nowrap;
  border-bottom: 1px solid #c0cad8;
  box-sizing: content-box;
}
.eh-l { grid-template-columns: 72px 68px 111px 1fr; padding-left: 9px; }
.eh-r { grid-template-columns: 68px 124.700px 1fr; padding-left: 101px; }

.blue { background: #a7bedc; border-bottom-color: #bccbe2; color: #2e3845; }
.blue .cell { border-right-color: #bccbe2; }
.teal { background: #c6e6ed; border-bottom-color: #d2dde9; }
.teal .cell { border-right-color: #d2dde9; }
.hl { background: #fffaeb; border-bottom-color: #e8e6da; }
.hl .cell { border-right-color: #eee9d8; }
.plain { background: #fff; }
.pick { background: #fdeeb0; box-shadow: inset -1px 0 0 #555; }
.sb-blank { background: #d0d8e5; }

.sbar {
  position: absolute;
  right: 0;
  width: 15px;
  bottom: 0;
  background: #d0d8e5;
  display: flex;
  flex-direction: column;
  align-items: center;
}
.sbar-top { top: 36px; padding: 7px 0 5px; }
.sbar-low { top: 18px; padding: 7px 0 7px; }
.thumb { display: block; width: 9px; background: #a3afc0; }
.thumb-top { height: 15px; margin: 8px 0 auto; }
.thumb-low { height: 18px; margin: auto 0 132px; }

.sum-bar {
  height: 20px;
  flex: none;
  display: flex;
  align-items: center;
}
.ignore { margin-left: auto; margin-right: 14px; display: flex; align-items: center; gap: 4px; }
.check {
  display: inline-flex;
  width: 9px;
  height: 9px;
  align-items: center;
  justify-content: center;
  background: #fff;
  border: 1px solid #b9c2d0;
  font-style: normal;
}
.checked { color: #7e8896; font-size: 9px; line-height: 9px; background: #f3f5f8; }
.sum { width: 676px; border-top: 1px solid #b6c0d0; flex: none; }
.sum .ghead, .sum .grow { grid-template-columns: 13px repeat(5, 60px) repeat(4, 60px) 59.400px 64.600px; }
.sum .grow { height: 16px; }
.plot { text-align: center; padding: 0; }

/* right column */
.right { flex: 1; display: flex; flex-direction: column; min-width: 0; }
.tabs {
  height: 25px;
  flex: none;
  display: flex;
  padding-top: 2px;
  box-sizing: border-box;
  border-left: 1px solid #b2bccb;
}
.tab {
  flex: none;
  box-sizing: border-box;
  line-height: 20px;
  text-align: center;
  white-space: nowrap;
  background: #cdd5e3;
  border: 1px solid #a9b4c6;
  border-left: 0;
  color: #3f4856;
}
.tab:nth-child(1) { width: 64px; }
.tab:nth-child(2) { width: 67px; }
.tab:nth-child(3) { width: 106px; }
.tab:nth-child(4) { width: 55px; }
.tab:nth-child(5) { padding-left: 9px; text-align: left; }
.tab.active { background: #d5dce9; border-bottom-color: transparent; }
.vol-bar {
  height: 20px;
  flex: none;
  display: flex;
  align-items: center;
  padding-left: 4.500px;
  white-space: nowrap;
  overflow: hidden;
}
.spinbox {
  width: 44px;
  height: 16px;
  box-sizing: border-box;
  margin-left: 5px;
  background: #fff;
  border: 1px solid #bcc5d3;
  display: flex;
  align-items: center;
  justify-content: flex-end;
  gap: 5px;
  padding-right: 3px;
  flex: none;
}
.spin { display: flex; flex-direction: column; gap: 3px; }
.proj { margin-left: 202.700px; flex: none; }
.proj-input {
  margin-left: 5px;
  width: 60px;
  height: 16px;
  line-height: 15px;
  box-sizing: border-box;
  background: #fff;
  border: 1px solid #bcc5d3;
  padding-left: 2px;
  flex: none;
}
.chart { width: 392px; height: 472px; display: block; flex: none; }
.grid-lines line { stroke: #e3e6ea; stroke-width: 1; opacity: .85; }
.ax { font: 8.800px "Liberation Sans", sans-serif; fill: #4d535c; }
.ax.mid { text-anchor: middle; }
.ax.end { text-anchor: end; }
.ax.flag { fill: #d4ecd4; }
.band-label { font: 9.500px "Liberation Sans", sans-serif; }
.on-light { fill: #6aa8cc; }
.on-dark { fill: #8fb4dc; }
.legend { fill: #edf2fa; fill-opacity: .9; stroke: #8e9bb0; }
.lg { font: 9.200px "Liberation Sans", sans-serif; }
.lg.end { text-anchor: end; }
.lg-low { font: 8.800px "Liberation Sans", sans-serif; }
.gk-name { font: 9.500px "DejaVu Sans Condensed", "Liberation Sans", sans-serif; fill: #7b8088; text-anchor: middle; }
.gk-val { font: 8.900px "Liberation Sans", sans-serif; text-anchor: middle; }
.tip { font: bold 9px "Liberation Sans", sans-serif; fill: #4f55ee; text-anchor: end; }
.tip.neg { fill: #f33; }
.zoombar {
  flex: 1;
  background: #28375a;
  color: #dde3ee;
  display: flex;
  align-items: center;
  justify-content: flex-end;
  gap: 8px;
  margin-top: 1px;
  font-size: 10.500px;
}
.zoom-dash { width: 6px; height: 1px; background: #dde3ee; margin-right: -4px; }
</style>
